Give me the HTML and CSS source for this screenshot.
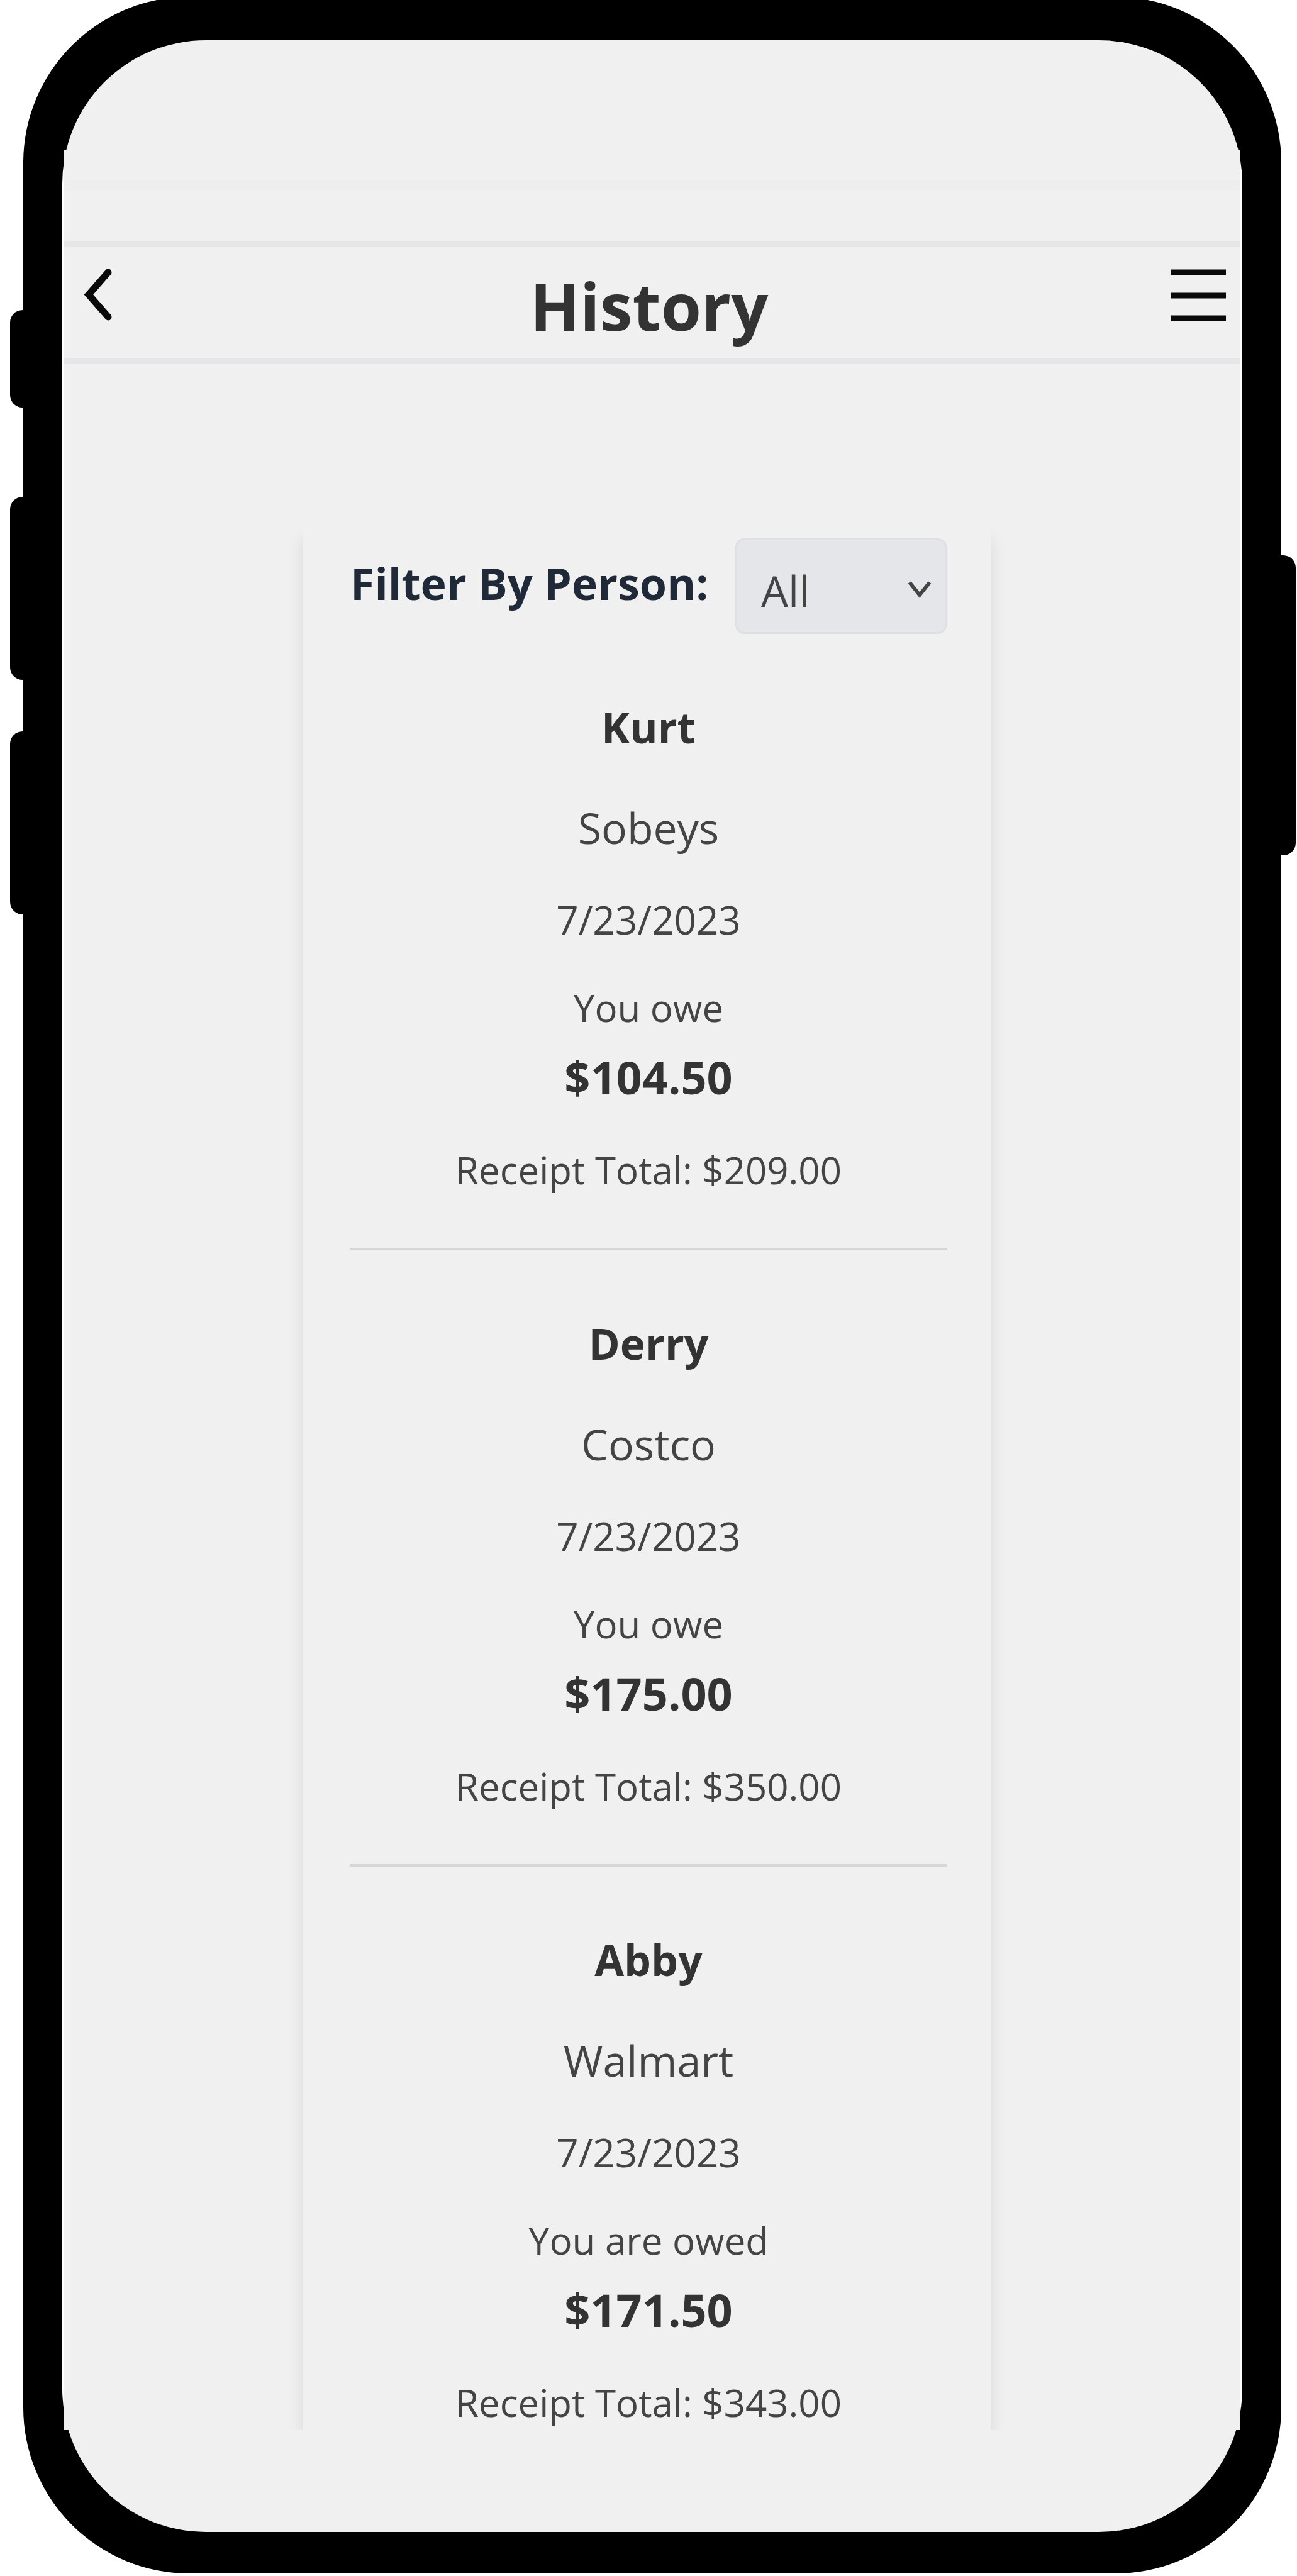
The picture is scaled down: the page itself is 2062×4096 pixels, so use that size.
FILE: index.html
```html
<!DOCTYPE html>
<html lang="en">
<head>
<meta charset="utf-8">
<meta name="viewport" content="width=device-width, initial-scale=1">
<title>History</title>
<link rel="stylesheet" href="styles.css">
</head>
<body>
<div class="phone">
  <span class="key key-mute"></span>
  <span class="key key-up"></span>
  <span class="key key-down"></span>
  <span class="key key-power"></span>
  <div class="screen">
    <div class="app">
      <div class="status"><div class="status-band"></div></div>
      <header class="nav">
        <button class="icon-button" type="button" aria-label="Back">
          <svg class="icon-back" viewBox="0 0 66 88" aria-hidden="true"><path d="M58 9 27 44.500 58 80"/></svg>
        </button>
        <h1 class="title">History</h1>
        <button class="icon-button icon-button-end" type="button" aria-label="Menu">
          <svg class="icon-menu" viewBox="0 0 90 88" aria-hidden="true"><path d="M1 9H89M1 46H89M1 82H89"/></svg>
        </button>
      </header>
      <main class="main">
        <section class="card">
          <div class="filter">
            <label class="filter-label" for="person">Filter By Person:</label>
            <div class="select-wrap">
              <select class="select" id="person">
                <option>All</option>
                <option>Kurt</option>
                <option>Derry</option>
                <option>Abby</option>
              </select>
              <svg class="chevron" viewBox="0 0 38 30" aria-hidden="true"><path d="M3 4 19 24 35 4"/></svg>
            </div>
          </div>
          <article class="entry">
            <h2 class="name">Kurt</h2>
            <p class="store">Sobeys</p>
            <p class="date">7/23/2023</p>
            <p class="owe">You owe</p>
            <p class="amount">$104.50</p>
            <p class="total">Receipt Total: $209.00</p>
          </article>
          <article class="entry">
            <h2 class="name">Derry</h2>
            <p class="store">Costco</p>
            <p class="date">7/23/2023</p>
            <p class="owe">You owe</p>
            <p class="amount">$175.00</p>
            <p class="total">Receipt Total: $350.00</p>
          </article>
          <article class="entry">
            <h2 class="name">Abby</h2>
            <p class="store">Walmart</p>
            <p class="date">7/23/2023</p>
            <p class="owe">You are owed</p>
            <p class="amount">$171.50</p>
            <p class="total">Receipt Total: $343.00</p>
          </article>
        </section>
      </main>
    </div>
  </div>
</div>
</body>
</html>
```
FILE: styles.css
```css
* {
  box-sizing: border-box;
}

body {
  margin: 0;
  background: #fff;
  color: #333;
  font-family: "Open Sans", "Noto Sans", sans-serif;
}

h1, h2, p {
  margin: 0;
}

/* Phone shell */
.phone {
  position: relative;
  margin: -5px 25px 0 37px;
  padding: 69px 62px 66px;
  border-radius: 264px;
  background: #000;
}

.key {
  position: absolute;
  left: -21px;
  width: 44px;
  border-radius: 20px;
  background: #000;
}

.key-mute {
  top: 498px;
  height: 155px;
}

.key-up {
  top: 795px;
  height: 291px;
}

.key-down {
  top: 1168px;
  height: 291px;
}

.key-power {
  top: 888px;
  right: -23px;
  left: auto;
  height: 477px;
}

.screen {
  padding: 174px 3px 162px;
  border-radius: 228px;
  background:
    linear-gradient(#f0f0f0, #f0f0f0) top / 100% 174px no-repeat,
    linear-gradient(#f0f0f0, #f0f0f0) bottom / 100% 162px no-repeat,
    #fff;
}

.app {
  position: relative;
  overflow: hidden;
  background: #f0f0f0;
}

.status {
  height: 145px;
  padding-top: 49px;
}

.status-band {
  height: 17px;
  background: #eee;
}

/* Top bar */
.nav {
  display: grid;
  grid-template-columns: 1fr auto 1fr;
  align-items: start;
  padding: 0 22px 0 12px;
  border-top: 10px solid #e6e6e6;
  border-bottom: 10px solid #e6e6e8;
}

.title {
  padding-top: 10px;
  font-size: 104px;
  font-weight: 700;
  line-height: 166px;
}

.icon-button {
  justify-self: start;
  margin-top: 31px;
  padding: 0;
  border: 0;
  background: none;
}

.icon-button-end {
  justify-self: end;
}

.icon-button svg {
  display: block;
  height: 88px;
  fill: none;
  stroke: #0a0a0a;
}

.icon-back {
  width: 66px;
  stroke-linecap: round;
  stroke-width: 11px;
}

.icon-menu {
  width: 90px;
  stroke-width: 9px;
}

/* History list */
.main {
  padding: 257px 396px 0 379px;
}

.card {
  padding: 20px 71px 0 76px;
  background: #f0f0f0;
  box-shadow: 0 20px 24px rgba(0, 0, 0, 0.09);
}

.filter {
  display: flex;
  justify-content: space-between;
}

.filter-label {
  color: #1f2937;
  font-size: 70px;
  font-weight: 700;
  line-height: 142px;
  white-space: nowrap;
}

.select-wrap {
  position: relative;
  width: 336px;
}

.select {
  display: block;
  width: 100%;
  height: 152px;
  padding: 12px 70px 0 38px;
  border: 3px solid #dfe0e4;
  border-radius: 14px;
  appearance: none;
  background: #e5e6ea;
  color: #444;
  font-family: inherit;
  font-size: 68px;
}

.chevron {
  position: absolute;
  top: 66px;
  right: 24px;
  width: 38px;
  height: 30px;
  fill: none;
  stroke: #444;
  stroke-width: 6px;
  pointer-events: none;
}

.entry {
  padding: 108px 0 88px;
  border-bottom: 4px solid #d6d6d8;
  text-align: center;
}

.entry:last-child {
  padding-bottom: 8px;
  border-bottom: 0;
}

.name {
  margin-bottom: 80px;
  font-size: 68px;
  line-height: 80px;
}

.store {
  margin-bottom: 70px;
  color: #444;
  font-size: 68px;
  line-height: 80px;
}

.date,
.owe,
.total {
  color: #444;
  font-size: 60px;
  line-height: 72px;
}

.date {
  margin-bottom: 68px;
  font-size: 62px;
}

.owe {
  margin-bottom: 34px;
}

.amount {
  margin-bottom: 72px;
  font-size: 72px;
  font-weight: 700;
  line-height: 80px;
}
```
